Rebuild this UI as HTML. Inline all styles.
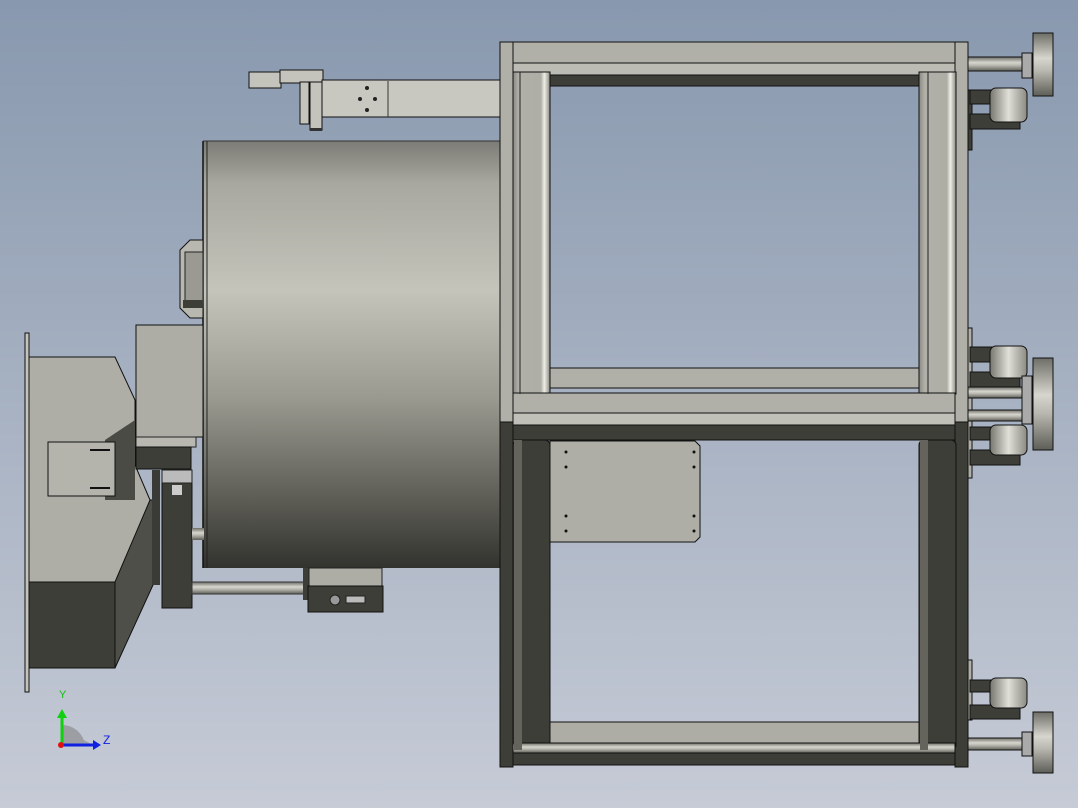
<!DOCTYPE html>
<html><head><meta charset="utf-8"><style>
html,body{margin:0;padding:0;width:1078px;height:808px;overflow:hidden}
svg{display:block}
text{font-family:"Liberation Sans",sans-serif}
</style></head><body>
<svg width="1078" height="808" viewBox="0 0 1078 808" xmlns="http://www.w3.org/2000/svg">
<defs>
<linearGradient id="bg" x1="0" y1="0" x2="0" y2="1">
<stop offset="0" stop-color="#8898ae"/><stop offset="1" stop-color="#c6cbd6"/></linearGradient>
<linearGradient id="drum" x1="0" y1="0" x2="0" y2="1">
<stop offset="0" stop-color="#7c7c76"/><stop offset="0.1" stop-color="#a8a8a0"/><stop offset="0.35" stop-color="#c4c4bb"/><stop offset="0.6" stop-color="#9a9a91"/><stop offset="0.85" stop-color="#5a5a53"/><stop offset="1" stop-color="#32332e"/></linearGradient>
<linearGradient id="cylV" x1="0" y1="0" x2="0" y2="1">
<stop offset="0" stop-color="#6e6e68"/><stop offset="0.4" stop-color="#d6d6ce"/><stop offset="0.6" stop-color="#b8b8b0"/><stop offset="1" stop-color="#5e5e58"/></linearGradient>
<linearGradient id="cylH" x1="0" y1="0" x2="1" y2="0">
<stop offset="0" stop-color="#77776f"/><stop offset="0.5" stop-color="#e0e0d8"/><stop offset="1" stop-color="#8a8a82"/></linearGradient>
<linearGradient id="postL" x1="0" y1="0" x2="1" y2="0">
<stop offset="0" stop-color="#8a8a82"/><stop offset="0.15" stop-color="#b0b0a8"/><stop offset="0.75" stop-color="#aeaea6"/><stop offset="0.85" stop-color="#eeeee6"/><stop offset="1" stop-color="#8a8a82"/></linearGradient>
</defs>
<rect width="1078" height="808" fill="url(#bg)"/>

<!-- top arm -->
<g stroke="#111" stroke-width="1">
<rect x="249" y="72" width="32" height="16" fill="#c4c4bc"/>
<rect x="280" y="70" width="43" height="13" fill="#c4c4bc"/>
<rect x="322" y="80" width="178" height="37" fill="#c8c8c0"/>
<rect x="300" y="82" width="9" height="42" fill="#c4c4bc"/>
<rect x="310" y="82" width="12" height="48" fill="#c4c4bc"/>
</g>
<rect x="310" y="128" width="12" height="3" fill="#333"/>
<g fill="#222"><circle cx="367" cy="88" r="2"/><circle cx="367" cy="110" r="2"/><circle cx="360" cy="99" r="2"/><circle cx="375" cy="99" r="2"/></g>
<line x1="388" y1="81" x2="388" y2="117" stroke="#333"/>

<!-- drum -->
<rect x="203" y="141" width="297" height="427" fill="url(#drum)"/>
<line x1="203" y1="141" x2="203" y2="568" stroke="#111" stroke-width="1.5"/>
<line x1="207" y1="141" x2="207" y2="568" stroke="#222"/>
<line x1="203" y1="141" x2="500" y2="141" stroke="#333"/>
<!-- side handle -->
<path d="M180 250 L190 240 L203 240 L203 318 L190 318 L180 308 Z" fill="#b8b8b0" stroke="#111"/>
<rect x="185" y="252" width="18" height="55" fill="#9a9a92" stroke="#222"/>
<rect x="183" y="300" width="20" height="8" fill="#3d3e38"/>

<!-- left assembly -->
<rect x="25" y="333" width="4" height="359" fill="#c4c4bc" stroke="#111"/>
<path d="M29 357 L115 357 L135 400 L135 465 L150 500 L150 582 L29 582 Z" fill="#aeaea6" stroke="#111"/>
<path d="M105 440 L135 420 L135 500 L105 500 Z" fill="#4a4b45"/>
<rect x="29" y="582" width="86" height="86" fill="#3d3e38" stroke="#111"/>
<path d="M115 582 L150 500 L153 500 L153 585 L115 668 Z" fill="#4f4f4a" stroke="#111"/>
<rect x="48" y="442" width="67" height="54" fill="#b4b4ac" stroke="#111"/>
<line x1="90" y1="450" x2="110" y2="450" stroke="#111" stroke-width="2"/>
<line x1="90" y1="488" x2="110" y2="488" stroke="#111" stroke-width="2"/>
<rect x="136" y="325" width="67" height="112" fill="#adada5" stroke="#111"/>
<rect x="136" y="437" width="60" height="10" fill="#b8b8b0" stroke="#222"/>
<rect x="136" y="447" width="55" height="22" fill="#3d3e38" stroke="#111"/>
<rect x="152" y="470" width="8" height="115" fill="#3a3b36"/>
<rect x="162" y="470" width="30" height="138" fill="#3d3e38" stroke="#111"/>
<rect x="162" y="470" width="30" height="13" fill="#bbb" stroke="#222"/>
<rect x="172" y="485" width="10" height="10" fill="#ccc"/>
<rect x="192" y="582" width="113" height="12" fill="url(#cylV)" stroke="#333"/>
<rect x="192" y="528" width="12" height="12" fill="url(#cylV)"/>
<rect x="303" y="568" width="6" height="32" fill="#3d3e38"/>
<rect x="309" y="568" width="73" height="18" fill="#adada5" stroke="#222"/>
<rect x="308" y="586" width="75" height="26" fill="#3d3e38" stroke="#111"/>
<circle cx="335" cy="600" r="5" fill="#999" stroke="#222"/>
<rect x="346" y="596" width="19" height="7" fill="#bbb" stroke="#222"/>

<!-- frame: upper -->
<g stroke="#111" stroke-width="1">
<rect x="500" y="42" width="13" height="380" fill="#b0b0a8"/>
<rect x="955" y="42" width="13" height="380" fill="#b0b0a8"/>
<rect x="513" y="42" width="442" height="22" fill="#b0b0a8"/>
<rect x="513" y="63" width="442" height="12" fill="#bcbcb4"/>
<rect x="548" y="75" width="372" height="11" fill="#3d3e38"/>
<rect x="513" y="72" width="37" height="322" fill="url(#postL)"/>
<rect x="919" y="72" width="37" height="322" fill="url(#postL)"/>
<rect x="550" y="368" width="369" height="20" fill="#b0b0a8"/>
<rect x="513" y="393" width="442" height="20" fill="#b0b0a8"/>
<rect x="513" y="413" width="442" height="12" fill="#c0c0b8"/>
</g>
<line x1="520" y1="72" x2="520" y2="394" stroke="#222"/>
<line x1="928" y1="72" x2="928" y2="394" stroke="#222"/>
<!-- frame: lower -->
<g stroke="#111" stroke-width="1">
<rect x="500" y="422" width="13" height="345" fill="#3d3e38"/>
<rect x="955" y="422" width="13" height="345" fill="#3d3e38"/>
<rect x="513" y="425" width="442" height="15" fill="#3d3e38"/>
<rect x="513" y="440" width="37" height="310" rx="5" fill="#3d3e38"/>
<rect x="919" y="440" width="37" height="310" rx="5" fill="#3d3e38"/>
<rect x="550" y="722" width="369" height="21" fill="#adada5"/>
<rect x="513" y="743" width="442" height="10" fill="url(#cylV)"/>
<rect x="513" y="753" width="442" height="12" fill="#3d3e38"/>
<path d="M550 441 L695 441 L700 446 L700 537 L695 542 L550 542 Z" fill="#aeaea6"/>
</g>
<rect x="514" y="440" width="8" height="310" fill="#64645c"/>
<rect x="920" y="440" width="8" height="310" fill="#64645c"/>
<g fill="#111"><circle cx="566" cy="452" r="1.5"/><circle cx="566" cy="467" r="1.5"/><circle cx="566" cy="516" r="1.5"/><circle cx="566" cy="531" r="1.5"/><circle cx="694" cy="452" r="1.5"/><circle cx="694" cy="467" r="1.5"/><circle cx="694" cy="516" r="1.5"/><circle cx="694" cy="531" r="1.5"/></g>

<!-- clamps -->
<g stroke="#111" stroke-width="1">
<rect x="968" y="90" width="4" height="60" fill="#3d3e38"/>
<rect x="970" y="90" width="30" height="14" fill="#3d3e38"/>
<rect x="970" y="114" width="50" height="15" fill="#3d3e38"/>
<rect x="990" y="88" width="37" height="34" rx="6" fill="url(#cylH)"/>
<rect x="968" y="328" width="4" height="150" fill="#b0b0a8"/>
<rect x="970" y="347" width="30" height="15" fill="#3d3e38"/>
<rect x="970" y="372" width="50" height="16" fill="#3d3e38"/>
<rect x="990" y="346" width="37" height="32" rx="6" fill="url(#cylH)"/>
<rect x="970" y="427" width="30" height="13" fill="#3d3e38"/>
<rect x="970" y="450" width="50" height="15" fill="#3d3e38"/>
<rect x="990" y="425" width="37" height="30" rx="6" fill="url(#cylH)"/>
<rect x="968" y="660" width="4" height="60" fill="#b0b0a8"/>
<rect x="970" y="680" width="30" height="12" fill="#3d3e38"/>
<rect x="970" y="705" width="50" height="14" fill="#3d3e38"/>
<rect x="990" y="678" width="37" height="30" rx="6" fill="url(#cylH)"/>
</g>
<!-- knobs -->
<g stroke="#111" stroke-width="1">
<rect x="968" y="57" width="56" height="14" fill="url(#cylV)"/>
<rect x="1022" y="53" width="10" height="25" fill="#aaa"/>
<rect x="1033" y="33" width="20" height="63" fill="url(#cylV)"/>
<rect x="968" y="387" width="56" height="11" fill="url(#cylV)"/>
<rect x="968" y="410" width="56" height="11" fill="url(#cylV)"/>
<rect x="1022" y="376" width="10" height="48" fill="#aaa"/>
<rect x="1033" y="358" width="20" height="92" fill="url(#cylV)"/>
<rect x="968" y="738" width="56" height="12" fill="url(#cylV)"/>
<rect x="1022" y="732" width="10" height="24" fill="#aaa"/>
<rect x="1033" y="712" width="20" height="61" fill="url(#cylV)"/>
</g>

<!-- axis triad -->
<path d="M62 745 L62 740 A30 30 0 0 1 92 745 Z" fill="#a0a2a8"/>
<path d="M62 745 L62 725 A23 23 0 0 1 85 745 Z" fill="#9c9ea4"/>
<line x1="62" y1="746" x2="62" y2="716" stroke="#10d010" stroke-width="3"/>
<polygon points="57,718 67,718 62,709" fill="#10d010"/>
<line x1="62" y1="745" x2="95" y2="745" stroke="#1020e0" stroke-width="3"/>
<polygon points="93,740 93,750 101,745" fill="#1020e0"/>
<circle cx="61" cy="745" r="3" fill="#e01010"/>
<text x="59" y="698" font-size="11" fill="#10c010">Y</text>
<text x="103" y="744" font-size="12" fill="#1020e0">Z</text>
</svg>
</body></html>
